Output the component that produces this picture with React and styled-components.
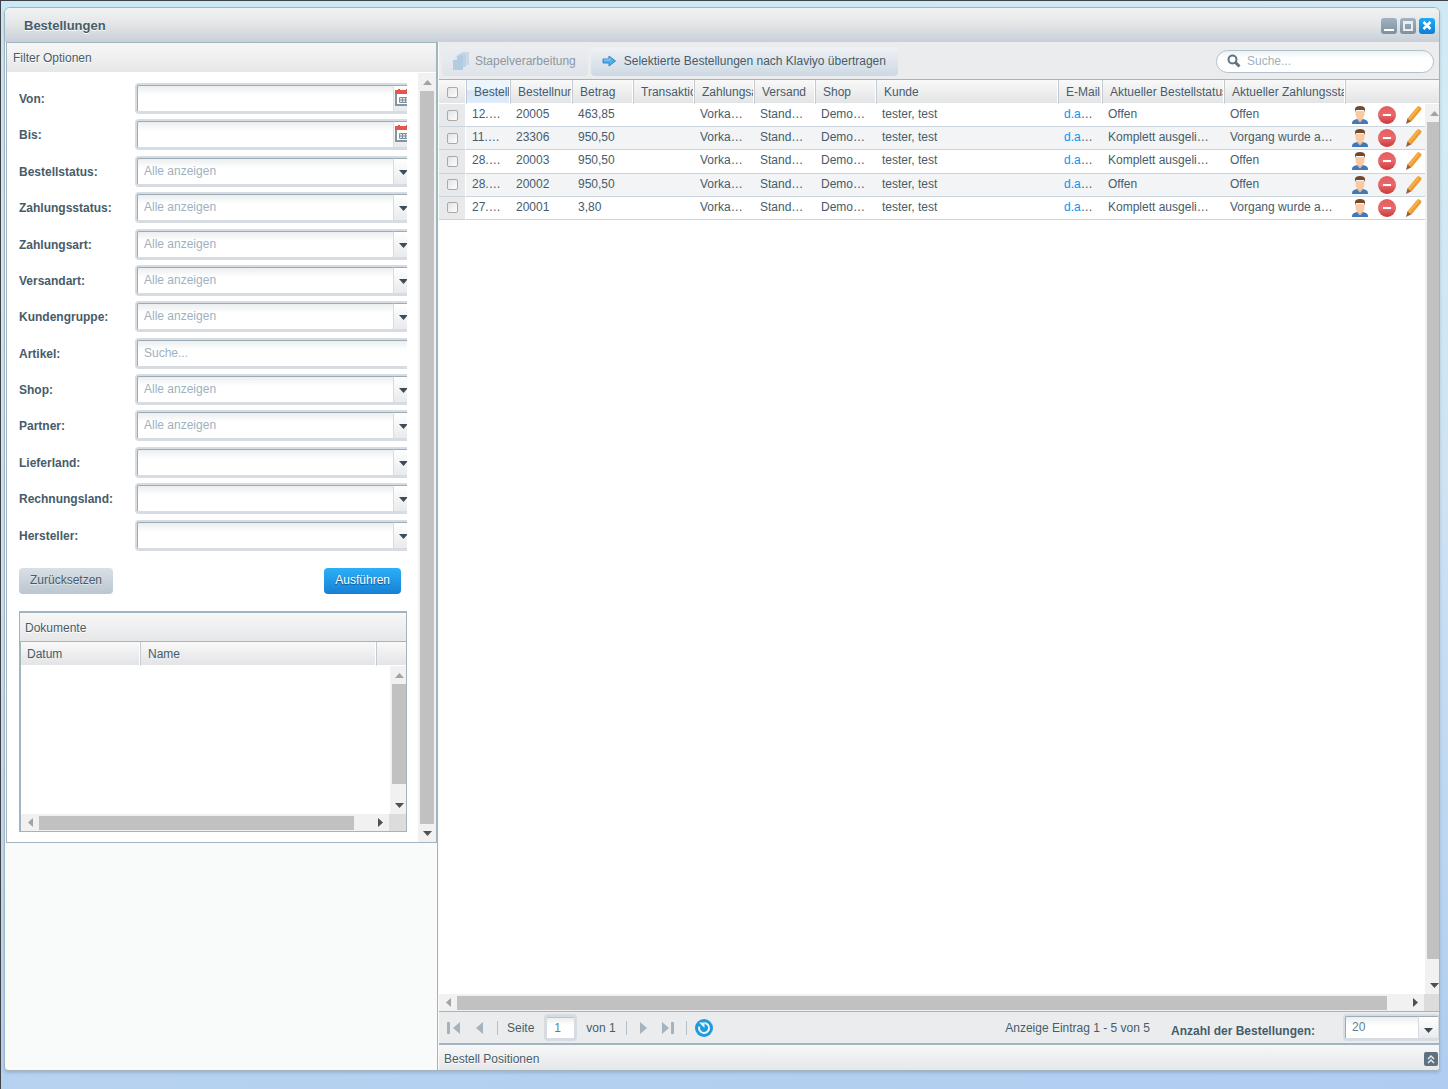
import React, { useState } from "react";
import styled, { createGlobalStyle, css } from "styled-components";

const filters = [
  { id: "from", label: "Von:", type: "date" },
  { id: "to", label: "Bis:", type: "date" },
  { id: "orderStatus", label: "Bestellstatus:", empty: "Alle anzeigen" },
  { id: "paymentStatus", label: "Zahlungsstatus:", empty: "Alle anzeigen" },
  { id: "payment", label: "Zahlungsart:", empty: "Alle anzeigen" },
  { id: "dispatch", label: "Versandart:", empty: "Alle anzeigen" },
  { id: "customerGroup", label: "Kundengruppe:", empty: "Alle anzeigen" },
  { id: "article", label: "Artikel:", type: "text" },
  { id: "shop", label: "Shop:", empty: "Alle anzeigen" },
  { id: "partner", label: "Partner:", empty: "Alle anzeigen" },
  { id: "deliveryCountry", label: "Lieferland:", empty: "" },
  { id: "billingCountry", label: "Rechnungsland:", empty: "" },
  { id: "supplier", label: "Hersteller:", empty: "" },
];

const columns = [
  { label: "Bestellzeit", width: 44, sorted: true },
  { label: "Bestellnummer", width: 62 },
  { label: "Betrag", width: 61 },
  { label: "Transaktion", width: 61 },
  { label: "Zahlungsart", width: 60 },
  { label: "Versand", width: 61 },
  { label: "Shop", width: 61 },
  { label: "Kunde" },
  { label: "E-Mail", width: 44 },
  { label: "Aktueller Bestellstatus", width: 122 },
  { label: "Aktueller Zahlungsstatus", width: 121 },
];

const orders = [
  { time: "12.…", number: "20005", amount: "463,85", status: "Offen", paid: "Offen" },
  { time: "11.…", number: "23306", amount: "950,50", status: "Komplett ausgeli…", paid: "Vorgang wurde a…" },
  { time: "28.…", number: "20003", amount: "950,50", status: "Komplett ausgeli…", paid: "Offen" },
  { time: "28.…", number: "20002", amount: "950,50", status: "Offen", paid: "Offen" },
  { time: "27.…", number: "20001", amount: "3,80", status: "Komplett ausgeli…", paid: "Vorgang wurde a…" },
];

function Arrow({ dir, color = "#505050" }) {
  const paths = {
    up: "M0 7L4.5 2L9 7Z",
    down: "M0 2L4.5 7L9 2Z",
    left: "M7 0L2 4.5L7 9Z",
    right: "M2 0L7 4.5L2 9Z",
  };
  return (
    <svg width="9" height="9" viewBox="0 0 9 9">
      <path d={paths[dir]} fill={color} />
    </svg>
  );
}

function CalendarIcon() {
  return (
    <svg width="16" height="18" viewBox="0 0 16 18">
      <path d="M1 3h14v13H1z" fill="#fff" stroke="#8195a3" strokeWidth="2" />
      <path d="M0 1h16v4H0z" fill="#e8534c" />
      <path d="M3 0h2v2H3zM11 0h2v2h-2z" fill="#e8534c" />
      <path
        d="M4.500 8.500h8v5h-8zM7.500 8v6M10.500 8v6M4 11h9"
        fill="#dfe5ea"
        stroke="#7e91a0"
        strokeWidth="1"
      />
    </svg>
  );
}

function UserIcon() {
  return (
    <svg width="16" height="18" viewBox="0 0 16 18">
      <path d="M0 18c0-3 1-4 5-5h6c4 1 5 2 5 5z" fill="#3f79bd" />
      <path d="M5.500 11h5v3L8 16.500 5.500 14z" fill="#f0b98c" />
      <path d="M3.500 5h9v3c0 3-2 6-4.500 6s-4.500-3-4.500-6z" fill="#f8cba4" />
      <path d="M3 6V3c0-2 2-3 5-3s5 1 5 3v3l-1-2c-3 0-6 0-8 0z" fill="#74482b" />
    </svg>
  );
}

function DeleteIcon() {
  return (
    <svg width="18" height="18" viewBox="0 0 18 18">
      <defs>
        <linearGradient id="del" x1="0" y1="0" x2="0" y2="1">
          <stop offset="0" stopColor="#e85a5c" />
          <stop offset="0.500" stopColor="#e76b6d" />
          <stop offset="1" stopColor="#cb3638" />
        </linearGradient>
      </defs>
      <circle cx="9" cy="9" r="9" fill="url(#del)" />
      <rect x="5" y="8" width="8" height="2" fill="#fff" />
    </svg>
  );
}

function PencilIcon() {
  return (
    <svg width="16" height="18" viewBox="0 0 16 18">
      <path d="M11 1l1.500-1 3 2-.5 2L5 16l-4-3z" fill="#ee9b2b" />
      <path d="M12 1L2 13l1.500 1L13.500 2z" fill="#f6b34d" />
      <path d="M1.500 12.500L5 15.500 0 18z" fill="#8d5f4c" />
    </svg>
  );
}

function DocumentsIcon() {
  return (
    <svg width="16" height="18" viewBox="0 0 16 18">
      <path d="M6 3l3-3h7v13H6z" fill="#c9d9e8" />
      <path d="M3 5l3-3h7v13H3z" fill="#bed2e5" />
      <path d="M0 8l4-4h6v14H0z" fill="#b3cbe1" />
      <path d="M0 8l4-4v4z" fill="#dde8f1" />
    </svg>
  );
}

function TransferIcon() {
  return (
    <svg width="14" height="12" viewBox="0 0 14 12">
      <path d="M1 4h6V1l6.500 5L7 11V8H1z" fill="#4db0ee" stroke="#3487c4" strokeWidth="1" />
      <path d="M2 5h6V3" fill="none" stroke="#8dd2fa" />
    </svg>
  );
}

function RefreshIcon() {
  return (
    <svg width="18" height="18" viewBox="0 0 18 18">
      <circle cx="9" cy="9" r="9" fill="#229ad8" />
      <path d="M9.500 4A5 5 0 1 1 4.300 7.500" fill="none" stroke="#e4f4fc" strokeWidth="2" />
      <path d="M4 3.500h5.500V9z" fill="#e4f4fc" />
    </svg>
  );
}

function Scrollbar({ horizontal, thumb = 100 }) {
  const [start, end] = horizontal ? ["left", "right"] : ["up", "down"];
  return (
    <Track $horizontal={horizontal} aria-hidden="true">
      <TrackEnd $horizontal={horizontal}>
        <Arrow dir={start} color="#a3a3a3" />
      </TrackEnd>
      <TrackRun $horizontal={horizontal}>
        <Thumb style={{ flexGrow: thumb }} />
        <span style={{ flexGrow: 100 - thumb }} />
      </TrackRun>
      <TrackEnd $horizontal={horizontal}>
        <Arrow dir={end} />
      </TrackEnd>
    </Track>
  );
}

function FilterField({ filter }) {
  const { id, label, type, empty } = filter;
  return (
    <>
      <FieldLabel htmlFor={id}>{label}</FieldLabel>
      <FieldClip>
        <FieldBox>
          {type ? (
            <TextInput id={id} type="text" placeholder={type === "text" ? "Suche..." : ""} />
          ) : (
            <Select id={id} $muted>
              <option>{empty}</option>
            </Select>
          )}
          {type === "date" && (
            <Trigger as="button" type="button" aria-label="Kalender" $date>
              <CalendarIcon />
            </Trigger>
          )}
          {!type && (
            <Trigger>
              <Arrow dir="down" color="#3d4c57" />
            </Trigger>
          )}
        </FieldBox>
      </FieldClip>
    </>
  );
}

function FilterPanel() {
  return (
    <Side>
      <Filter>
        <PanelTitle>Filter Optionen</PanelTitle>
        <FilterBody>
          <FilterContent>
            <FilterForm>
              {filters.map(filter => (
                <FilterField key={filter.id} filter={filter} />
              ))}
            </FilterForm>
            <Actions>
              <Button type="button">Zurücksetzen</Button>
              <Button type="button" $primary>
                Ausführen
              </Button>
            </Actions>
            <Documents />
          </FilterContent>
          <Scrollbar />
        </FilterBody>
      </Filter>
    </Side>
  );
}

function Documents() {
  return (
    <DocPanel>
      <PanelTitle $inner>Dokumente</PanelTitle>
      <DocGrid>
        <Table>
          <colgroup>
            <col width="119" />
            <col />
            <col width="30" />
          </colgroup>
          <thead>
            <tr>
              <Th $first>Datum</Th>
              <Th>Name</Th>
              <Th />
            </tr>
          </thead>
        </Table>
        <ScrollY $shift={2}>
          <Scrollbar thumb={89} />
        </ScrollY>
      </DocGrid>
      <ScrollX $corner={17} $inset>
        <Scrollbar horizontal thumb={95} />
      </ScrollX>
    </DocPanel>
  );
}

function OrderGrid() {
  return (
    <GridArea>
      <Table>
        <colgroup>
          <col width="27" />
          {columns.map(col => (
            <col key={col.label} width={col.width} />
          ))}
          <col width="94" />
        </colgroup>
        <thead>
          <tr>
            <Th $first $check>
              <Checkbox type="checkbox" aria-label="Alle auswählen" />
            </Th>
            {columns.map(col => (
              <Th key={col.label} $sorted={col.sorted}>
                {col.label}
              </Th>
            ))}
            <Th />
          </tr>
        </thead>
        <Rows>
          {orders.map(order => (
            <Row key={order.number}>
              <CheckCell>
                <Checkbox type="checkbox" aria-label={order.number} />
              </CheckCell>
              <Td>{order.time}</Td>
              <Td>{order.number}</Td>
              <Td>{order.amount}</Td>
              <Td />
              <Td>Vorka…</Td>
              <Td>Stand…</Td>
              <Td>Demo…</Td>
              <Td>tester, test</Td>
              <Td>
                <a href="#mail">d.a</a>…
              </Td>
              <Td>{order.status}</Td>
              <Td>{order.paid}</Td>
              <ActionCell>
                <RowActions>
                  <IconButton aria-label="Kunde öffnen">
                    <UserIcon />
                  </IconButton>
                  <IconButton aria-label="Löschen">
                    <DeleteIcon />
                  </IconButton>
                  <IconButton aria-label="Bearbeiten">
                    <PencilIcon />
                  </IconButton>
                </RowActions>
              </ActionCell>
            </Row>
          ))}
        </Rows>
      </Table>
      <ScrollY $shift={4}>
        <Scrollbar thumb={98} />
      </ScrollY>
    </GridArea>
  );
}

function PagingBar() {
  const [page, setPage] = useState("1");

  return (
    <Paging>
      <PageButton aria-label="Erste Seite">
        <svg width="14" height="14" viewBox="0 0 14 14">
          <path d="M0 1h3v12H0zM13 1v12L6 7z" fill="#a6b3bd" />
        </svg>
      </PageButton>
      <PageButton aria-label="Vorherige Seite" $gap={15}>
        <svg width="8" height="14" viewBox="0 0 8 14">
          <path d="M7 1v12L0 7z" fill="#a6b3bd" />
        </svg>
      </PageButton>
      <Separator $gap={13} />
      <PageLabel htmlFor="page">Seite</PageLabel>
      <PageBox>
        <PageInput id="page" value={page} onChange={e => setPage(e.target.value)} />
      </PageBox>
      <span>von 1</span>
      <Separator $gap={10} />
      <PageButton aria-label="Nächste Seite" $gap={12}>
        <svg width="8" height="14" viewBox="0 0 8 14">
          <path d="M1 1v12l7-6z" fill="#a6b3bd" />
        </svg>
      </PageButton>
      <PageButton aria-label="Letzte Seite" $gap={15}>
        <svg width="14" height="14" viewBox="0 0 14 14">
          <path d="M0 1v12l7-6zM9 1h3v12H9z" fill="#a6b3bd" />
        </svg>
      </PageButton>
      <Separator $gap={10} />
      <PageButton aria-label="Aktualisieren" $gap={8}>
        <RefreshIcon />
      </PageButton>
      <Summary>Anzeige Eintrag 1 - 5 von 5</Summary>
      <SizeLabel htmlFor="size">Anzahl der Bestellungen:</SizeLabel>
      <SizeClip>
        <FieldBox $small>
          <Select id="size">
            <option>20</option>
          </Select>
          <Trigger $low>
            <Arrow dir="down" color="#3d4c57" />
          </Trigger>
        </FieldBox>
      </SizeClip>
    </Paging>
  );
}

function App() {
  return (
    <Desktop>
      <GlobalStyle />
      <Window>
        <TitleBar>
          <h1>Bestellungen</h1>
          <WindowTools>
            <ToolButton aria-label="Minimieren">
              <svg width="16" height="16" viewBox="0 0 16 16">
                <path d="M3 11h10v2H3z" fill="#fff" />
              </svg>
            </ToolButton>
            <ToolButton aria-label="Maximieren">
              <svg width="16" height="16" viewBox="0 0 16 16">
                <path d="M3 3h10v10H3zM5 6v5h6V6z" fill="#e9edf0" fillRule="evenodd" />
              </svg>
            </ToolButton>
            <ToolButton aria-label="Schließen" $close>
              <svg width="16" height="16" viewBox="0 0 16 16">
                <path d="M4.500 4l7 7M11.500 4l-7 7" stroke="#fff" strokeWidth="2.500" />
              </svg>
            </ToolButton>
          </WindowTools>
        </TitleBar>
        <Content>
          <FilterPanel />
          <Main>
            <Toolbar>
              <ToolbarButton disabled>
                <DocumentsIcon />
                Stapelverarbeitung
              </ToolbarButton>
              <ToolbarButton>
                <TransferIcon />
                Selektierte Bestellungen nach Klaviyo übertragen
              </ToolbarButton>
              <Search>
                <svg width="14" height="14" viewBox="0 0 14 14">
                  <circle cx="5.500" cy="5.500" r="4" fill="none" stroke="#5f7380" strokeWidth="2" />
                  <path d="M8.500 8.500L12.500 12.500" stroke="#5f7380" strokeWidth="3" />
                </svg>
                <input type="text" placeholder="Suche..." aria-label="Suche" />
              </Search>
            </Toolbar>
            <OrderGrid />
            <ScrollX $corner={15}>
              <Scrollbar horizontal thumb={98} />
            </ScrollX>
            <PagingBar />
            <Positions>
              <span>Bestell Positionen</span>
              <ExpandButton aria-label="Aufklappen">
                <svg width="14" height="14" viewBox="0 0 14 14">
                  <path d="M4 7l3-3 3 3M4 11l3-3 3 3" fill="none" stroke="#e3e9ed" strokeWidth="1.500" />
                </svg>
              </ExpandButton>
            </Positions>
          </Main>
        </Content>
      </Window>
    </Desktop>
  );
}

const line = "#a2b4bf";

const GlobalStyle = createGlobalStyle`
  * {
    box-sizing: border-box;
  }
  body {
    margin: 0;
    color: #475c6a;
    font: 12px/14px "Liberation Sans", Arial, sans-serif;
  }
  button, input, select {
    margin: 0;
    padding: 0;
    border: none;
    outline: none;
    background: none;
    color: inherit;
    font: inherit;
  }
  svg {
    display: block;
    flex: none;
  }
  ::placeholder {
    color: #9db1c0;
    opacity: 1;
  }
`;

const Desktop = styled.div`
  display: flex;
  min-height: 100vh;
  padding: 6px 8px 18px 3px;
  border-top: 1px solid #3f4347;
  border-left: 1px solid #3f4347;
  background: linear-gradient(175deg, #cbe8f6 0%, #d3ecf5 20%, #cfe3f3 50%, #b0cdf0 100%);
`;

const Window = styled.section`
  flex: 1;
  min-width: 0;
  display: flex;
  flex-direction: column;
  border: 1px solid ${line};
  border-radius: 6px 6px 4px 4px;
  background: #f9fafa;
  box-shadow: 0 2px 3px rgba(90, 120, 150, 0.3);
  overflow: hidden;
`;

const TitleBar = styled.header`
  display: flex;
  align-items: center;
  justify-content: space-between;
  height: 34px;
  padding: 2px 4px 0 19px;
  background: linear-gradient(#f2f2f2, #e2e5e7 50%, #c8cfd7);
  h1 {
    margin: 0;
    font-size: 13px;
    line-height: 16px;
    text-shadow: 0 1px 0 #fff;
  }
`;

const WindowTools = styled.div`
  display: flex;
  gap: 3px;
`;

const ToolButton = styled.button`
  width: 16px;
  height: 16px;
  border-radius: 3px;
  background: ${({ $close }) =>
    $close ? "linear-gradient(#22acf5, #0c7fd6)" : "linear-gradient(#a3b3bf, #7b90a0)"};
`;

const Content = styled.div`
  flex: 1;
  display: flex;
`;

const Side = styled.aside`
  flex: none;
  width: 433px;
  padding-left: 1px;
  border-right: 1px solid ${line};
`;

const Filter = styled.div`
  border: 1px solid ${line};
`;

const PanelTitle = styled.h2`
  margin: 0;
  padding: 2px 6px 0;
  border-bottom: 1px solid ${({ $inner }) => ($inner ? line : "#fff")};
  background: linear-gradient(#f7f7f7, #e6e7e9);
  font-size: 12px;
  font-weight: normal;
  line-height: 27px;
  text-shadow: 0 1px 0 #fff;
  ${({ $inner }) =>
    $inner &&
    css`
      padding: 2px 5px 0;
      line-height: 26px;
    `}
`;

const FilterBody = styled.div`
  display: flex;
  background: #fff;
`;

const FilterContent = styled.div`
  flex: 1;
  min-width: 0;
  padding: 10px 11px 10px 12px;
`;

const FilterForm = styled.form`
  display: grid;
  grid-template-columns: 116px 1fr;
  grid-template-rows: repeat(13, 1fr);
  height: 473px;
`;

const FieldLabel = styled.label`
  font-weight: bold;
  line-height: 32px;
`;

const FieldClip = styled.div`
  min-width: 0;
  overflow: hidden;
`;

const FieldBox = styled.div`
  display: flex;
  width: calc(100% + 8px);
  height: 31px;
  border: 2px solid #d6dce2;
  border-bottom-width: 3px;
  border-radius: 4px;
  background: #d6dce2;
  ${({ $small }) =>
    $small &&
    css`
      width: 97px;
      height: 27px;
    `}
`;

const inputStyles = css`
  flex: 1;
  min-width: 0;
  padding: 0 7px 1px 6px;
  border-top: 1px solid #9dabb5;
  border-left: 1px solid #9dabb5;
  border-radius: 2px 0 0 0;
  background: linear-gradient(#ebeeef, #fff 9px);
`;

const TextInput = styled.input`
  ${inputStyles}
`;

const Select = styled.select`
  ${inputStyles}
  appearance: none;
  color: ${({ $muted }) => ($muted ? "#9db1c0" : "#5f8096")};
`;

const Trigger = styled.span`
  flex: none;
  display: flex;
  align-items: center;
  justify-content: center;
  width: 20px;
  padding-top: ${({ $low }) => ($low ? 6 : 2)}px;
  border-top: 1px solid #9dabb5;
  border-left: 1px solid #d6dce2;
  background: linear-gradient(#fff, #e8eaed);
  ${({ $date }) =>
    $date &&
    css`
      justify-content: flex-start;
      padding: 0 0 1px 1px;
    `}
`;

const Actions = styled.div`
  display: flex;
  justify-content: space-between;
  margin: 12px 6px 17px 0;
`;

const Button = styled.button`
  height: 26px;
  padding: 0 11px 2px;
  border-radius: 4px;
  background: linear-gradient(#d9dfe6, #bbc6d0);
  text-shadow: 0 1px 0 #e3e8ec;
  ${({ $primary }) =>
    $primary &&
    css`
      color: #fff;
      background: linear-gradient(#2bb0f8, #1780d4);
      text-shadow: 0 1px 1px #0d4c86;
    `}
`;

const DocPanel = styled.div`
  border: 1px solid ${line};
  border-top-width: 2px;
`;

const DocGrid = styled.div`
  position: relative;
  height: 172px;
  border-left: 1px solid ${line};
  background: #fff;
  overflow: hidden;
`;

const Main = styled.main`
  flex: 1;
  min-width: 0;
  display: flex;
  flex-direction: column;
  padding-left: 1px;
`;

const Toolbar = styled.div`
  display: flex;
  align-items: center;
  gap: 3px;
  height: 38px;
  padding: 2px 5px 0 3px;
  border-bottom: 1px solid ${line};
  background: #ebecee;
`;

const ToolbarButton = styled.button`
  display: flex;
  align-items: center;
  gap: 8px;
  height: 29px;
  padding: 0 12px 1px 11px;
  border-radius: 4px;
  background: linear-gradient(#f0f2f5, #cdd8e4);
  &:disabled {
    gap: 6px;
    background: linear-gradient(#ebedf0, #dfe4eb);
    color: #8d979f;
  }
`;

const Search = styled.div`
  display: flex;
  align-items: center;
  gap: 6px;
  width: 218px;
  height: 23px;
  margin-left: auto;
  padding: 0 10px 1px;
  border: 1px solid #b0c0cc;
  border-radius: 12px;
  background: linear-gradient(#eef1f3, #fff 7px);
  input {
    flex: 1;
    min-width: 0;
  }
`;

const GridArea = styled.div`
  position: relative;
  flex: 1;
  background: #fff;
  overflow: hidden;
`;

const Table = styled.table`
  width: 100%;
  border-collapse: separate;
  border-spacing: 0;
  table-layout: fixed;
`;

const Th = styled.th`
  height: 24px;
  padding: 0 0 0 7px;
  border-left: 1px solid #c3cad0;
  border-right: 1px solid #fff;
  border-bottom: 1px solid #fff;
  background: linear-gradient(#f9f9f9, #e3e4e6);
  font-weight: normal;
  text-align: left;
  white-space: nowrap;
  overflow: hidden;
  ${({ $first }) =>
    $first &&
    css`
      padding-left: 6px;
      border-left: none;
    `}
  ${({ $check }) => $check && "padding: 2px 0 0 8px;"}
  ${({ $sorted }) => $sorted && "background: linear-gradient(#edf5fd 45%, #d5e6f9 46%, #dfecfa);"}
  &:last-child {
    border-right: none;
  }
`;

const Rows = styled.tbody`
  height: 116px;
`;

const Row = styled.tr`
  &:nth-child(even) {
    background: #f2f4f6;
  }
`;

const Td = styled.td`
  padding: 0 0 2px 6px;
  border-bottom: 1px solid #cbd4dc;
  white-space: nowrap;
  overflow: hidden;
  a {
    color: #0b93f5;
    text-decoration: none;
  }
`;

const CheckCell = styled(Td)`
  padding: 0 0 0 8px;
  border-right: 1px solid #fff;
  background: #e8e9eb;
`;

const ActionCell = styled(Td)`
  padding: 0 0 0 7px;
`;

const Checkbox = styled.input`
  appearance: none;
  display: block;
  width: 11px;
  height: 11px;
  border: 1px solid #a9a9a9;
  border-radius: 2px;
  background: linear-gradient(135deg, #e4e4e4, #fdfdfd);
`;

const RowActions = styled.div`
  display: flex;
  gap: 10px;
`;

const IconButton = styled.button`
  cursor: pointer;
`;

const ScrollY = styled.div`
  position: absolute;
  top: 24px;
  right: ${({ $shift }) => -$shift}px;
  bottom: 0;
  display: flex;
`;

const ScrollX = styled.div`
  display: flex;
  padding-right: ${({ $corner }) => $corner}px;
  border-left: ${({ $inset }) => ($inset ? `1px solid ${line}` : "none")};
  background: #dcdcdc;
`;

const Track = styled.div`
  display: flex;
  flex: ${({ $horizontal }) => ($horizontal ? "1" : "none")};
  flex-direction: ${({ $horizontal }) => ($horizontal ? "row" : "column")};
  ${({ $horizontal }) => ($horizontal ? "height: 17px" : "width: 18px")};
  background: #f1f1f1;
`;

const TrackEnd = styled.span`
  flex: none;
  display: flex;
  align-items: center;
  justify-content: center;
  width: 18px;
  height: ${({ $horizontal }) => ($horizontal ? 17 : 18)}px;
`;

const TrackRun = styled.div`
  flex: 1;
  display: flex;
  flex-direction: ${({ $horizontal }) => ($horizontal ? "row" : "column")};
  padding: ${({ $horizontal }) => ($horizontal ? "2px 0 1px" : "0 2px")};
`;

const Thumb = styled.span`
  background: #c1c1c1;
`;

const Paging = styled.div`
  display: flex;
  align-items: center;
  height: 34px;
  padding-left: 8px;
  border-top: 1px solid ${line};
  border-bottom: 2px solid ${line};
  background: #ebecee;
  overflow: hidden;
`;

const PageButton = styled.button`
  margin-left: ${({ $gap = 0 }) => $gap}px;
`;

const Separator = styled.span`
  width: 1px;
  height: 14px;
  margin-left: ${({ $gap }) => $gap}px;
  background: #b4bfc8;
`;

const PageLabel = styled.label`
  margin: 0 10px 0 9px;
`;

const PageBox = styled.div`
  display: flex;
  width: 33px;
  height: 27px;
  margin-right: 9px;
  border: 3px solid #d6dce2;
  border-radius: 4px;
`;

const PageInput = styled.input`
  width: 100%;
  padding-left: 7px;
  border-top: 1px solid #b9c4cc;
  background: linear-gradient(#ebeeef, #fff 7px);
  color: #5f8096;
`;

const Summary = styled.span`
  margin-left: auto;
`;

const SizeLabel = styled.label`
  margin: 7px 28px 0 21px;
  font-weight: bold;
`;

const SizeClip = styled.div`
  width: 96px;
  overflow: hidden;
`;

const Positions = styled.div`
  display: flex;
  align-items: center;
  justify-content: space-between;
  height: 25px;
  padding: 3px 1px 0 5px;
  background: linear-gradient(#f7f7f7, #e6e7e9);
  text-shadow: 0 1px 0 #fff;
`;

const ExpandButton = styled.button`
  border-radius: 2px;
  background: #5c7281;
`;

export default App;
